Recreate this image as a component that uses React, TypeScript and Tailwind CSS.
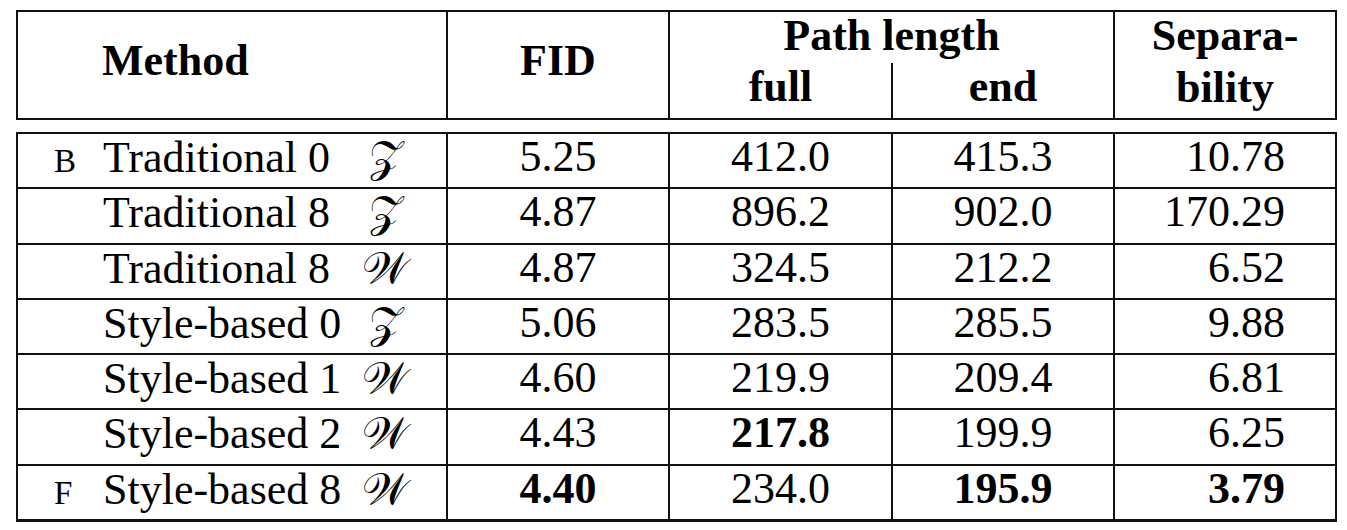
import React from "react";

type Row = {
  tag?: string;
  name: string;
  space: string;
  fid: string;
  full: string;
  end: string;
  sep: string;
  bold?: ("fid" | "full" | "end" | "sep")[];
};

const Z = "\u{1D4B5}";
const W = "\u{1D4B2}";

const rows: Row[] = [
  { tag: "B", name: "Traditional 0", space: Z, fid: "5.25", full: "412.0", end: "415.3", sep: "10.78" },
  { name: "Traditional 8", space: Z, fid: "4.87", full: "896.2", end: "902.0", sep: "170.29" },
  { name: "Traditional 8", space: W, fid: "4.87", full: "324.5", end: "212.2", sep: "6.52" },
  { name: "Style-based 0", space: Z, fid: "5.06", full: "283.5", end: "285.5", sep: "9.88" },
  { name: "Style-based 1", space: W, fid: "4.60", full: "219.9", end: "209.4", sep: "6.81" },
  { name: "Style-based 2", space: W, fid: "4.43", full: "217.8", end: "199.9", sep: "6.25", bold: ["full"] },
  { tag: "F", name: "Style-based 8", space: W, fid: "4.40", full: "234.0", end: "195.9", sep: "3.79", bold: ["fid", "end", "sep"] },
];

const cols = "grid grid-cols-[428px_222px_223px_222px_222px]";

export default function App() {
  return (
    <div className="w-[1347px] h-[530px] bg-white text-black pl-[16px] pt-[10px] text-[44px] font-['Liberation_Serif','Times_New_Roman',serif]">
      {/* header block */}
      <div className={`${cols} w-[1321px] h-[110px] border-2 border-[#111] font-bold`}>
        <div className="pl-[84px] pt-[25px] leading-[48px]">Method</div>
        <div className="border-l-2 border-[#111] text-center pt-[25px] leading-[48px]">FID</div>
        <div className="col-span-2 border-l-2 border-[#111] flex flex-col">
          <div className="h-[48px] leading-[48px] text-center">Path length</div>
          <div className="mt-[4px] h-[54px] grid grid-cols-[221px_222px]">
            <div className="text-center leading-[48px] -mt-px">full</div>
            <div className="border-l-2 border-[#111] text-center leading-[48px] -mt-px">end</div>
          </div>
        </div>
        <div className="border-l-2 border-[#111] text-center">
          <div className="h-[48px] leading-[48px]">Separa-</div>
          <div className="mt-[4px] leading-[48px]">bility</div>
        </div>
      </div>

      {/* body block */}
      <div className="mt-[12px] w-[1321px] border-2 border-b-[3px] border-[#111]">
        {rows.map((r, i) => {
          const b = (k: "fid" | "full" | "end" | "sep") => (r.bold?.includes(k) ? "font-bold" : "");
          return (
            <div
              key={i}
              className={`${cols} leading-[46px] ${i === 0 ? "h-[53.3px]" : "h-[55.3px] border-t-2 border-[#111]"}`}
            >
              <div className="flex items-baseline pl-[36px]">
                <span className="w-[49px] text-[33px]">{r.tag ?? ""}</span>
                <span className="w-[252px] whitespace-nowrap">{r.name}</span>
                <span className="w-[60px] text-center font-['DejaVu_Serif',serif]">{r.space}</span>
              </div>
              <div className={`border-l-2 border-[#111] text-center ${b("fid")}`}>{r.fid}</div>
              <div className={`border-l-2 border-[#111] text-center ${b("full")}`}>{r.full}</div>
              <div className={`border-l-2 border-[#111] text-center ${b("end")}`}>{r.end}</div>
              <div className={`border-l-2 border-[#111] text-right pr-[50px] ${b("sep")}`}>{r.sep}</div>
            </div>
          );
        })}
      </div>
    </div>
  );
}
